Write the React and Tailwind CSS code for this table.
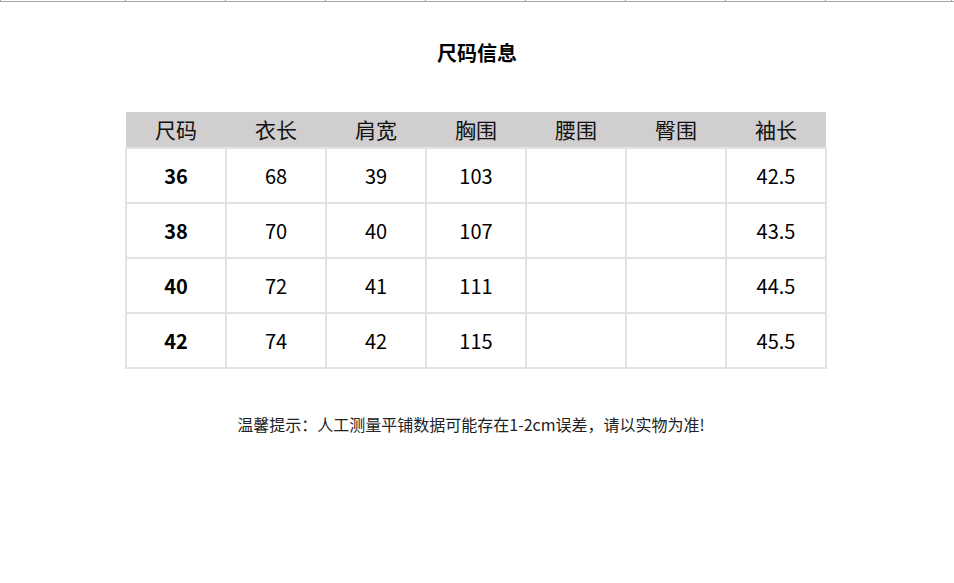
const headers = ['尺码', '衣长', '肩宽', '胸围', '腰围', '臀围', '袖长'];

const rows = [
  ['36', '68', '39', '103', '', '', '42.5'],
  ['38', '70', '40', '107', '', '', '43.5'],
  ['40', '72', '41', '111', '', '', '44.5'],
  ['42', '74', '42', '115', '', '', '45.5'],
];

const font = { fontFamily: '"Noto Sans CJK SC", "Noto Sans", sans-serif' };

export default function App() {
  return (
    <div className="w-[954px] h-[583px] bg-white text-black" style={font}>
      {/* leftover edge of the table above */}
      <div className="flex h-[2px] border-b border-[#a3a3a3]">
        <div className="w-[125px] border-l border-[#a3a3a3]" />
        {headers.map((h) => (
          <div key={h} className="w-[100px] border-l border-[#a3a3a3]" />
        ))}
        <div className="w-[127px] border-x border-[#a3a3a3]" />
      </div>

      <h1 className="mt-[37px] text-center text-[20px] font-bold leading-[28px]">尺码信息</h1>

      <table className="ml-[125px] mt-[45px] w-[701px] border-collapse table-fixed">
        <thead>
          <tr className="h-[36px] bg-[#d0cece]">
            {headers.map((h) => (
              <th key={h} className="w-[100px] p-0 text-[21px] font-normal leading-none text-[#111]">
                {h}
              </th>
            ))}
          </tr>
        </thead>
        <tbody>
          {rows.map((r) => (
            <tr key={r[0]} className="h-[55px]">
              {r.map((c, i) => (
                <td
                  key={i}
                  className={`border-2 border-[#e2e2e2] p-0 text-center text-[20px] leading-none ${i === 0 ? 'font-bold' : ''}`}
                >
                  {c}
                </td>
              ))}
            </tr>
          ))}
        </tbody>
      </table>

      <p className="mt-[45px] pr-[12px] text-center text-[16px] leading-[20px] text-[#222]">
        温馨提示：人工测量平铺数据可能存在1-2cm误差，请以实物为准!
      </p>
    </div>
  );
}
